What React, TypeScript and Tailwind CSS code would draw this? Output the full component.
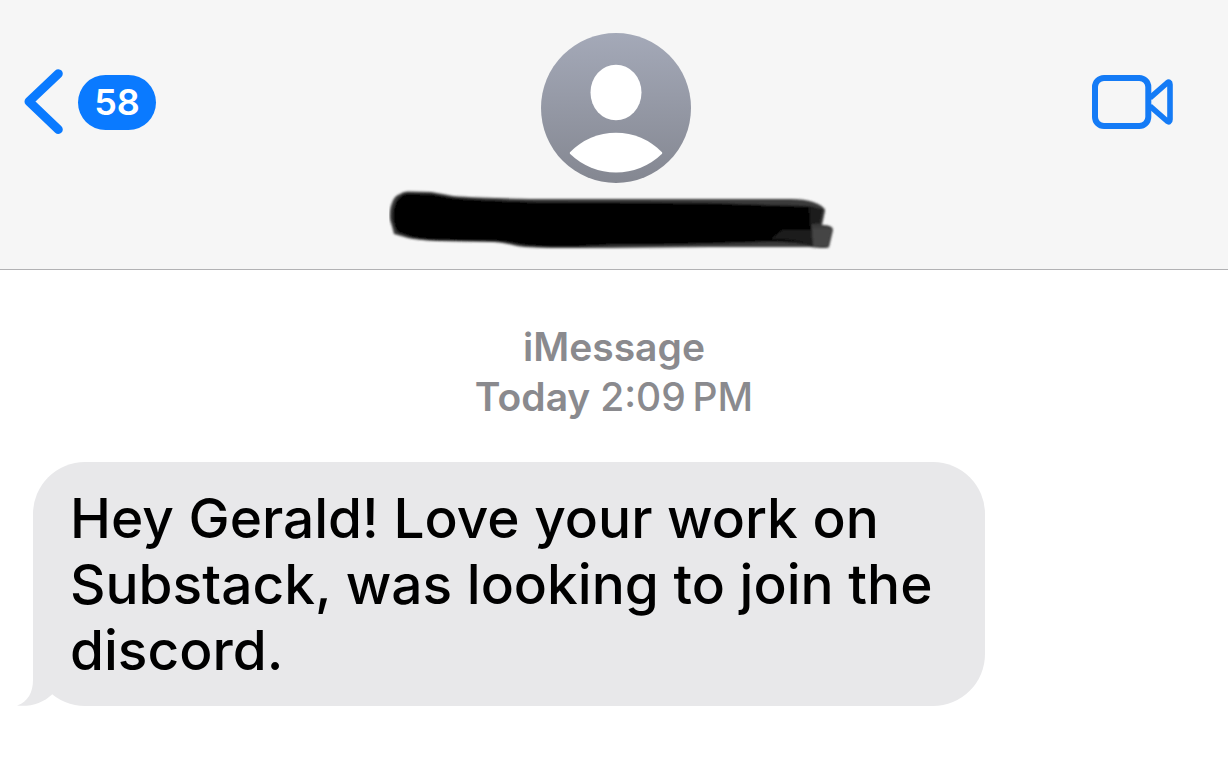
function BackChevron() {
  return (
    <svg width="40" height="66" viewBox="0 0 40 66" fill="none" aria-hidden="true">
      <path
        d="M34.3 4.7 L5 32.5 L34.3 60.5"
        stroke="#0a7aff"
        strokeWidth="9"
        strokeLinecap="round"
        strokeLinejoin="round"
      />
    </svg>
  );
}

function VideoIcon() {
  return (
    <svg width="82" height="54" viewBox="0 0 82 54" fill="none" stroke="#147bf6" aria-hidden="true">
      <rect x="3" y="3" width="53.3" height="48" rx="9" strokeWidth="6" />
      <path
        d="M58 22.8 L75 8 Q78 5.8 78 9.4 V44.6 Q78 48.2 75 46 L58 31.2"
        strokeWidth="5.6"
        strokeLinejoin="round"
      />
    </svg>
  );
}

function Avatar() {
  return (
    <svg width="150" height="150" viewBox="0 0 150 150" role="img" aria-label="Contact photo">
      <defs>
        <linearGradient id="avatar" x1="0" y1="0" x2="0" y2="1">
          <stop offset="0" stopColor="#a4a9b8" />
          <stop offset="1" stopColor="#848791" />
        </linearGradient>
      </defs>
      <circle cx="75" cy="75" r="75" fill="url(#avatar)" />
      <ellipse cx="75" cy="59.5" rx="25.5" ry="27.8" fill="#fff" />
      <path
        d="M29 119.3 A64 64 0 0 1 121 119.3 Q121.6 120.2 120.8 121 A66 66 0 0 1 29.2 121 Q28.4 120.2 29 119.3Z"
        fill="#fff"
      />
    </svg>
  );
}

function HiddenName() {
  return (
    <svg width="454" height="62" viewBox="0 0 454 62" role="img" aria-label="Name hidden">
      <defs>
        <filter id="soft" x="-5%" y="-10%" width="110%" height="120%">
          <feGaussianBlur stdDeviation="0.9" />
        </filter>
      </defs>
      <g filter="url(#soft)">
        <path
          d="M1 31 Q0 20 3 14 Q5 7 11 5 Q14 2 20 2.500 L42 3 Q54 5 64 7 Q90 9 141 10 L401 10 Q416 10 424 13 Q436 17 436 22 L433 36 Q444 36 444 41 L440 58 Q438 60 421 58 L321 58 L221 59 L181 59 Q140 59 128 57 Q112 53 104 53 L48 52 Q28 51 19 49 L5 45 Q3 37 1 31Z"
          fill="#3a3a3a"
        />
        <path
          d="M4 31 Q3 20 7 13 Q10 6 18 4.500 L42 5 Q54 7 64 9 Q100 12 160 13 L320 14 Q370 16 415 17 Q431 18 433 23 L430 34 L422 35 L424 57 Q405 52 372 53 Q300 56 221 56 L181 58 Q140 58 128 55 Q112 52 104 52 L48 51 Q28 50 19 47 L8 43 Q5 37 4 31Z"
          fill="#000"
        />
        <path d="M420 18 L434 20 L431 35 L421 34Z" fill="#1c1c1c" />
        <path d="M393 41 L423 41 L423 57 Q409 50 382 50Z" fill="#1c1c1c" />
        <path d="M423 39 L443 40 L439 57 L424 57Z" fill="#444" />
      </g>
    </svg>
  );
}

function BubbleTail() {
  return (
    <svg
      className="absolute bottom-0 -left-4"
      width="40"
      height="56"
      viewBox="0 0 40 56"
      fill="#e8e8ea"
      aria-hidden="true"
    >
      <path d="M16 0 V30 C16 42 11 52 0 55.600 C14 57 26 53 35 44.500 V0Z" />
    </svg>
  );
}

export default function App() {
  return (
    <div className="min-h-screen bg-white font-['Inter','Liberation_Sans',sans-serif]">
      <header className="grid grid-cols-[1fr_auto_1fr] items-start border-b border-[#b2b2b4] bg-[#f6f6f6] pr-5 pb-[18px] pl-6">
        <button type="button" aria-label="Back, 58 unread" className="mt-[69px] flex items-center gap-[14px] justify-self-start">
          <BackChevron />
          <span className="flex h-[55px] w-[78px] items-center justify-center rounded-full bg-[#0a7aff] text-[36px] font-semibold text-white">
            58
          </span>
        </button>
        <div className="flex flex-col items-center gap-[6px] pt-[33px]">
          <Avatar />
          <HiddenName />
        </div>
        <button type="button" aria-label="Video call" className="mt-[75px] mr-[34px] justify-self-end">
          <VideoIcon />
        </button>
      </header>
      <main className="px-[33px] pt-[52px] pb-14">
        <div className="text-center text-[39px] leading-[50px] font-semibold text-[#8a8a8e]">
          <p>iMessage</p>
          <p>
            Today <time className="font-medium">2:09&#8239;PM</time>
          </p>
        </div>
        <div className="relative mt-10 w-fit max-w-[952px] rounded-[52px] bg-[#e8e8ea] px-[37px] py-[23px]">
          <BubbleTail />
          <p className="text-[55px] leading-[66px] font-medium text-black">
            Hey Gerald! Love your work on Substack, was looking to join the discord.
          </p>
        </div>
      </main>
    </div>
  );
}
